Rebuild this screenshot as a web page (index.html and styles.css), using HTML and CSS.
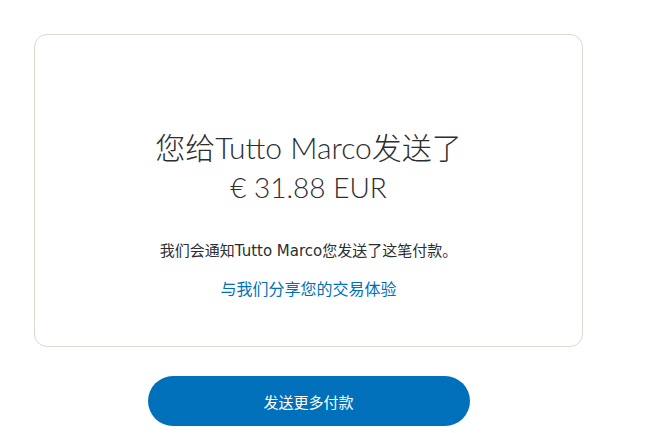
FILE: index.html
```html
<!DOCTYPE html>
<html lang="zh-CN">
<head>
<meta charset="utf-8">
<title>付款已发送</title>
<link rel="stylesheet" href="styles.css">
</head>
<body>
<main class="page">
  <section class="card">
    <h1 class="title">您给Tutto Marco发送了</h1>
    <p class="amount">€ 31.88 EUR</p>
    <p class="note">我们会通知Tutto Marco您发送了这笔付款。</p>
    <a class="share" href="#">与我们分享您的交易体验</a>
  </section>
  <div class="actions">
    <button class="btn" type="button">发送更多付款</button>
  </div>
</main>
</body>
</html>
```

FILE: styles.css
```css
html, body {
  margin: 0;
  padding: 0;
  background: #ffffff;
}

body {
  font-family: "DejaVu Sans", "Noto Sans CJK SC", sans-serif;
  color: #2c2e2f;
}

.page {
  width: 549px;
  margin: 34px 0 0 34px;
  display: flex;
  flex-direction: column;
  align-items: center;
}

.card {
  box-sizing: border-box;
  width: 549px;
  height: 313px;
  border: 1px solid #dcd9d1;
  border-radius: 13px;
  display: flex;
  flex-direction: column;
  align-items: center;
  padding-top: 92px;
}

.title {
  margin: 0;
  font-family: "Lato", "Noto Sans CJK SC", sans-serif;
  font-weight: 300;
  font-size: 30px;
  line-height: 40px;
  color: #2c2e2f;
}

.amount {
  margin: 2px 0 0;
  font-family: "Lato", "Noto Sans CJK SC", sans-serif;
  font-weight: 300;
  font-size: 28px;
  line-height: 36px;
  color: #2c2e2f;
}

.note {
  margin: 36px 0 0;
  font-size: 15px;
  line-height: 20px;
  color: #2c2e2f;
}

.share {
  margin-top: 16px;
  font-family: "Noto Sans CJK SC", sans-serif;
  font-size: 16px;
  line-height: 22px;
  color: #0070ba;
  text-decoration: none;
}

.actions {
  margin-top: 29px;
}

.btn {
  width: 322px;
  height: 50px;
  border: none;
  border-radius: 25px;
  background: #0070ba;
  color: #ffffff;
  font-family: "Noto Sans CJK SC", sans-serif;
  font-size: 15px;
  cursor: pointer;
}
```
